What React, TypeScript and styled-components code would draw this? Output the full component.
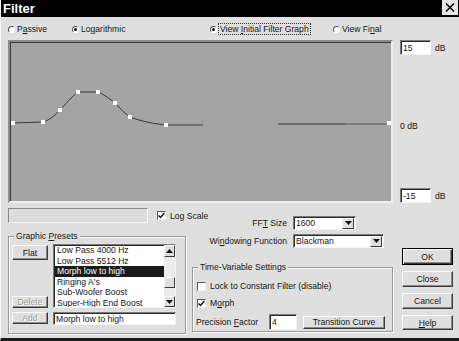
import styled, { createGlobalStyle } from "styled-components";

const Global = createGlobalStyle`
  html, body { margin: 0; padding: 0; background: #dfdfdf; }
  body { font-family: "Liberation Sans", Arial, sans-serif; font-size: 8.6px; color: #161616; }
  * { box-sizing: border-box; }
`

const Window = styled.div`
  width: 459px;
  height: 341px;
  background: #dfdfdf;
  border-left: 1px solid #f6f6f6;
  border-bottom: 3px solid #1c1c1c;
  display: flex;
  flex-direction: column;
  overflow: hidden;
`

const TitleBar = styled.div`
  height: 17px;
  background: #000;
  color: #fff;
  display: flex;
  align-items: flex-start;
  justify-content: space-between;
  padding: 0 1px 0 2px;
  .tit{
    font-size: 13px;
    font-weight: bold;
    line-height: 17px;
  }
`

const CloseBtn = styled.div`
  width: 16px;
  height: 15px;
  background: #e6e6e6;
  display: flex;
  align-items: center;
  justify-content: center;
`

const RadioRow = styled.div`
  height: 23px;
  display: flex;
  align-items: center;
  padding: 1px 0 0 7px;
`

const RadioItem = styled.div<{ $w?: number }>`
  width: ${p => p.$w ? p.$w + "px" : "auto"};
  display: flex;
  align-items: center;
  gap: 2px;
  white-space: nowrap;
  .focus{
    outline: 1px dotted #333;
    padding: 0 1px;
  }
`

const RadioDot = styled.span<{ $on?: boolean }>`
  width: 7px;
  height: 7px;
  border-radius: 50%;
  background: #fff;
  border: 1px solid;
  border-color: #555 #fff #fff #555;
  display: flex;
  align-items: center;
  justify-content: center;
  &::after{
    content: "";
    width: 3px;
    height: 3px;
    border-radius: 50%;
    background: ${p => p.$on ? "#111" : "transparent"};
  }
`

const GraphRow = styled.div`
  display: flex;
  padding-left: 7px;
`

const GraphFrame = styled.div`
  width: 385px;
  height: 163px;
  background: #a4a4a4;
  border: 2px solid;
  border-color: #8c8c8c #eeeeee #eeeeee #8c8c8c;
  box-shadow: inset 1px 1px 0 #3a3a3a;
`

const SideScale = styled.div`
  margin-left: 7px;
  height: 163px;
  display: flex;
  flex-direction: column;
  justify-content: space-between;
  .mid{
    margin-top: 10px;
    line-height: 11px;
  }
`

const DbRow = styled.div`
  display: flex;
  align-items: center;
  gap: 4px;
`

const Field = styled.div<{ $w: number; $h: number }>`
  width: ${p => p.$w}px;
  height: ${p => p.$h}px;
  flex-shrink: 0;
  background: #fff;
  border: 1px solid;
  border-color: #7a7a7a #f4f4f4 #f4f4f4 #7a7a7a;
  box-shadow: inset 1px 1px 0 #2a2a2a;
  display: flex;
  align-items: center;
  padding-left: 2px;
  white-space: nowrap;
  overflow: hidden;
`

const Bottom = styled.div`
  display: flex;
  padding-left: 7px;
  margin-top: 5px;
`

const LeftCol = styled.div`
  width: 178px;
  flex-shrink: 0;
`

const TopLine = styled.div`
  height: 15px;
  display: flex;
  align-items: center;
`

const EmptyBox = styled.div`
  width: 140px;
  height: 15px;
  flex-shrink: 0;
  background: #dcdcdc;
  border: 1px solid;
  border-color: #8a8a8a #f4f4f4 #f4f4f4 #8a8a8a;
`

const CheckRow = styled.div<{ $ml?: number; $mt?: number }>`
  display: flex;
  align-items: center;
  gap: 4px;
  margin-left: ${p => p.$ml ?? 0}px;
  margin-top: ${p => p.$mt ?? 0}px;
  white-space: nowrap;
  flex-shrink: 0;
`

const Check = styled.span`
  width: 9px;
  height: 9px;
  background: #fff;
  border: 1px solid;
  border-color: #555 #f4f4f4 #f4f4f4 #555;
  display: flex;
  align-items: center;
  justify-content: center;
  flex-shrink: 0;
`

const Group = styled.div<{ $h: number; $mt: number }>`
  position: relative;
  height: ${p => p.$h}px;
  margin-top: ${p => p.$mt}px;
  border: 1px solid #9a9a9a;
  box-shadow: inset 1px 1px 0 #fbfbfb, 1px 1px 0 #fbfbfb;
`

const Caption = styled.span`
  position: absolute;
  top: -6px;
  left: 5px;
  padding: 0 2px;
  background: #dfdfdf;
  line-height: 11px;
  white-space: nowrap;
`

const PresetGrid = styled.div`
  display: grid;
  grid-template-columns: 36px 123px;
  grid-template-rows: 64px 12px;
  column-gap: 5px;
  row-gap: 4px;
  padding: 7px 0 0 3px;
`

const BtnCol = styled.div`
  display: flex;
  flex-direction: column;
  justify-content: space-between;
  padding-top: 1px;
`

const Button = styled.div<{ $h: number; $off?: boolean; $def?: boolean }>`
  height: ${p => p.$h}px;
  width: 100%;
  background: #dfdfdf;
  display: flex;
  align-items: center;
  justify-content: center;
  white-space: nowrap;
  border: 1px solid;
  border-color: ${p => p.$def ? "#000" : "#fbfbfb #3a3a3a #3a3a3a #fbfbfb"};
  box-shadow: ${p => p.$def
    ? "inset 1px 1px 0 #fbfbfb, inset -1px -1px 0 #3a3a3a, inset -2px -2px 0 #8a8a8a"
    : "inset -1px -1px 0 #8a8a8a"};
  color: ${p => p.$off ? "#9c9c9c" : "#161616"};
  text-shadow: ${p => p.$off ? "1px 1px 0 #fff" : "none"};
`

const ListBox = styled.div`
  background: #fff;
  border: 1px solid;
  border-color: #7a7a7a #f4f4f4 #f4f4f4 #7a7a7a;
  box-shadow: inset 1px 1px 0 #2a2a2a;
  display: flex;
  overflow: hidden;
`

const Items = styled.div`
  flex: 1;
  padding: 0 0 0 1px;
`

const Item = styled.div<{ $sel?: boolean }>`
  height: 10.6px;
  line-height: 10.6px;
  padding-left: 2px;
  white-space: nowrap;
  background: ${p => p.$sel ? "#1a1a1a" : "transparent"};
  color: ${p => p.$sel ? "#fff" : "#161616"};
`

const Scroll = styled.div`
  width: 11px;
  display: flex;
  flex-direction: column;
  background: #ececec;
  .track{
    flex: 1;
    display: flex;
    flex-direction: column;
    padding-top: 20px;
  }
`

const ScrollBtn = styled.div<{ $h: number; $w?: number }>`
  height: ${p => p.$h}px;
  width: ${p => p.$w ? p.$w + "px" : "auto"};
  background: #dfdfdf;
  border: 1px solid;
  border-color: #fbfbfb #3a3a3a #3a3a3a #fbfbfb;
  display: flex;
  align-items: center;
  justify-content: center;
`

const MidCol = styled.div`
  width: 201px;
  margin-left: 6px;
  flex-shrink: 0;
`

const FormRow = styled.div<{ $mt: number }>`
  display: flex;
  align-items: center;
  margin-top: ${p => p.$mt}px;
  .lbl{
    width: 95px;
    text-align: right;
    margin-right: 6px;
    white-space: nowrap;
  }
`

const Select = styled.div<{ $w: number }>`
  width: ${p => p.$w}px;
  height: 14px;
  background: #fff;
  border: 1px solid;
  border-color: #7a7a7a #f4f4f4 #f4f4f4 #7a7a7a;
  box-shadow: inset 1px 1px 0 #2a2a2a;
  display: flex;
  align-items: center;
  justify-content: space-between;
  padding: 1px 1px 1px 2px;
`

const TimeBody = styled.div`
  padding: 13px 0 0 4px;
  display: flex;
  flex-direction: column;
`

const PrecRow = styled.div`
  display: flex;
  align-items: center;
  margin-top: 6px;
  margin-left: -1px;
  .lbl{
    width: 73px;
    white-space: nowrap;
  }
`

const CurveBtn = styled.div`
  width: 82px;
  margin-left: 6px;
`

const RightCol = styled.div`
  width: 51px;
  margin-left: 9px;
  padding-top: 40px;
  display: flex;
  flex-direction: column;
  gap: 6px;
`

const DownArrow = () => (
  <svg width="7" height="4" viewBox="0 0 7 4"><path d="M0 0H7L3.5 4Z" fill="#111" /></svg>
)
const UpArrow = () => (
  <svg width="7" height="4" viewBox="0 0 7 4"><path d="M0 4H7L3.5 0Z" fill="#111" /></svg>
)
const Tick = () => (
  <svg width="7" height="7" viewBox="0 0 7 7"><path d="M0.5 3.5L2.5 5.5L6.5 1" stroke="#111" strokeWidth="1.5" fill="none" /></svg>
)

const pts: [number, number][] = [
  [3, 81], [33, 80], [50, 68], [68, 50], [88, 50], [105, 61], [120, 75], [156, 83],
]

const Graph = () => (
  <svg width="381" height="159" viewBox="0 0 381 159">
    <path d="M3 81 L33 80 C40 78 45 73 50 68 C56 62 62 54 68 50 L88 50 C95 53 100 57 105 61 C110 66 115 72 120 75 C130 79 145 82 156 83 L193 83"
      stroke="#3a3a3a" strokeWidth="1" fill="none" />
    <path d="M268 82 H335" stroke="#333" strokeWidth="1.2" />
    <path d="M335 82 H379" stroke="#555" strokeWidth="1.2" />
    {pts.map(([x, y], i) => (
      <rect key={i} x={x - 2} y={y - 2} width="4" height="4" fill="#fff" />
    ))}
    <rect x="377" y="79" width="4" height="4" fill="#fff" />
  </svg>
)

const presets = [
  "Low Pass 4000 Hz",
  "Low Pass 5512 Hz",
  "Morph low to high",
  "Ringing A's",
  "Sub-Woofer Boost",
  "Super-High End Boost",
]

export default function App() {
  return <>
    <Global />
    <Window>
      <TitleBar>
        <span className="tit">Filter</span>
        <CloseBtn>
          <svg width="10" height="9" viewBox="0 0 10 9">
            <path d="M1 0.5L9 8.5M9 0.5L1 8.5" stroke="#111" strokeWidth="1.6" />
          </svg>
        </CloseBtn>
      </TitleBar>

      <RadioRow>
        <RadioItem $w={64}><RadioDot /><span>P<u>a</u>ssive</span></RadioItem>
        <RadioItem $w={138}><RadioDot $on /><span>Lo<u>g</u>arithmic</span></RadioItem>
        <RadioItem $w={123}><RadioDot $on /><span className="focus">View <u>I</u>nitial Filter Graph</span></RadioItem>
        <RadioItem><RadioDot /><span>View Fi<u>n</u>al</span></RadioItem>
      </RadioRow>

      <GraphRow>
        <GraphFrame><Graph /></GraphFrame>
        <SideScale>
          <DbRow><Field $w={31} $h={15}>15</Field>dB</DbRow>
          <div className="mid">0 dB</div>
          <DbRow><Field $w={31} $h={15}>-15</Field>dB</DbRow>
        </SideScale>
      </GraphRow>

      <Bottom>
        <LeftCol>
          <TopLine>
            <EmptyBox />
            <CheckRow $ml={9}><Check><Tick /></Check><span>Log Scale</span></CheckRow>
          </TopLine>
          <Group $h={98} $mt={13}>
            <Caption>Graphic <u>P</u>resets</Caption>
            <PresetGrid>
              <BtnCol>
                <Button $h={15}>Flat</Button>
                <Button $h={12} $off>Delete</Button>
              </BtnCol>
              <ListBox>
                <Items>
                  {presets.map((name, i) => (
                    <Item key={name} $sel={i === 2}>{name}</Item>
                  ))}
                </Items>
                <Scroll>
                  <ScrollBtn $h={12}><UpArrow /></ScrollBtn>
                  <div className="track">
                    <ScrollBtn $h={11} />
                  </div>
                  <ScrollBtn $h={11}><DownArrow /></ScrollBtn>
                </Scroll>
              </ListBox>
              <Button $h={12} $off>Add</Button>
              <Field $w={123} $h={13}>Morph low to high</Field>
            </PresetGrid>
          </Group>
        </LeftCol>

        <MidCol>
          <FormRow $mt={8}>
            <span className="lbl">FF<u>T</u> Size</span>
            <Select $w={63}>1600<ScrollBtn $h={11} $w={12}><DownArrow /></ScrollBtn></Select>
          </FormRow>
          <FormRow $mt={4}>
            <span className="lbl">Wi<u>n</u>dowing Function</span>
            <Select $w={91}>Blackman<ScrollBtn $h={11} $w={12}><DownArrow /></ScrollBtn></Select>
          </FormRow>
          <Group $h={65} $mt={19}>
            <Caption>Time-Variable Settings</Caption>
            <TimeBody>
              <CheckRow><Check /><span>Lock to Constant Filter (disable)</span></CheckRow>
              <CheckRow $mt={7}><Check><Tick /></Check><span>M<u>o</u>rph</span></CheckRow>
              <PrecRow>
                <span className="lbl">Precision <u>F</u>actor</span>
                <Field $w={28} $h={16}>4</Field>
                <CurveBtn><Button $h={13}>Transition Curve</Button></CurveBtn>
              </PrecRow>
            </TimeBody>
          </Group>
        </MidCol>

        <RightCol>
          <Button $h={17} $def>OK</Button>
          <Button $h={16}>Close</Button>
          <Button $h={16}>Cancel</Button>
          <Button $h={15}><span><u>H</u>elp</span></Button>
        </RightCol>
      </Bottom>
    </Window>
  </>
}
